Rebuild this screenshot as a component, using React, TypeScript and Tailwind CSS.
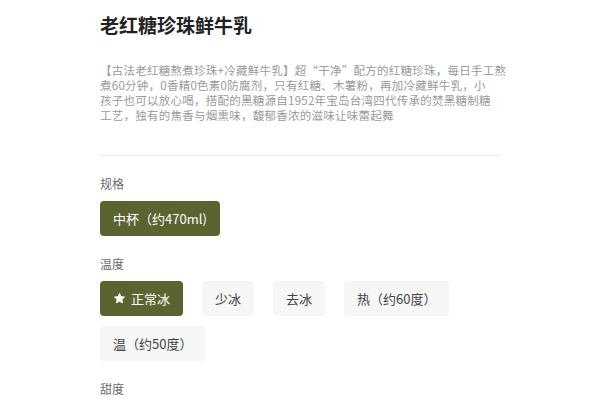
import React, { useState } from 'react';

const FONT = { fontFamily: '"PingFang SC", "Noto Sans CJK SC", "Noto Sans", sans-serif' };

type Group = {
  title: string;
  options: string[];
  selected: number;
  star?: boolean;
};

const groups: Group[] = [
  { title: '规格', options: ['中杯（约470ml)'], selected: 0 },
  { title: '温度', options: ['正常冰', '少冰', '去冰', '热（约60度）', '温（约50度）'], selected: 0, star: true },
];

const descLines = [
  '【古法老红糖熬煮珍珠+冷藏鲜牛乳】超“干净”配方的红糖珍珠，每日手工熬',
  '煮60分钟，0香精0色素0防腐剂，只有红糖、木薯粉，再加冷藏鲜牛乳，小',
  '孩子也可以放心喝，搭配的黑糖源自1952年宝岛台湾四代传承的焚黑糖制糖',
  '工艺，独有的焦香与烟熏味，馥郁香浓的滋味让味蕾起舞',
];

// Small filled star used on the recommended option
const Star = () => (
  <svg viewBox="0 0 24 24" className="w-[13px] h-[13px] mr-[5px]" fill="currentColor">
    <path d="M12 2.5l2.8 5.9 6.5.8-4.8 4.5 1.2 6.4L12 17l-5.7 3.1 1.2-6.4-4.8-4.5 6.5-.8z" strokeLinejoin="round" stroke="currentColor" strokeWidth="1.5" />
  </svg>
);

const OptionGroup = ({ group }: { group: Group }) => {
  const [active, setActive] = useState(group.selected);
  return (
    <div className="mt-[19px]">
      <div className="text-[12px] leading-[18px] text-[#6b6b6b]">{group.title}</div>
      <div className="flex flex-wrap gap-x-[19px] gap-y-[10px] mt-[8px]">
        {group.options.map((opt, i) => (
          <button
            key={opt}
            onClick={() => setActive(i)}
            className={
              i === active
                ? 'h-[35px] px-[13px] rounded-[4px] bg-[#5a6431] text-white text-[13px] flex items-center'
                : 'h-[35px] px-[13px] rounded-[4px] bg-[#f6f6f6] text-[#444] text-[13px] flex items-center'
            }
          >
            {group.star && i === 0 && <Star />}
            {opt}
          </button>
        ))}
      </div>
    </div>
  );
};

export default function App() {
  return (
    <div className="w-[600px] h-[400px] bg-white overflow-hidden" style={FONT}>
      <div className="w-[400px] mx-auto pt-[12px]">
        <h1 className="text-[19px] leading-[26px] font-bold text-[#222]">老红糖珍珠鲜牛乳</h1>
        <p className="mt-[25px] text-[11.5px] leading-[15px] text-[#9a9a9a] tracking-[0.25px]">
          {descLines.map((line) => (
            <span key={line} className="block whitespace-nowrap">
              {line}
            </span>
          ))}
        </p>
        <div className="mt-[32px] h-px bg-[#eeeeee]" />
        {groups.map((g) => (
          <OptionGroup key={g.title} group={g} />
        ))}
        <div className="mt-[19px] text-[12px] leading-[18px] text-[#6b6b6b]">甜度</div>
      </div>
    </div>
  );
}
